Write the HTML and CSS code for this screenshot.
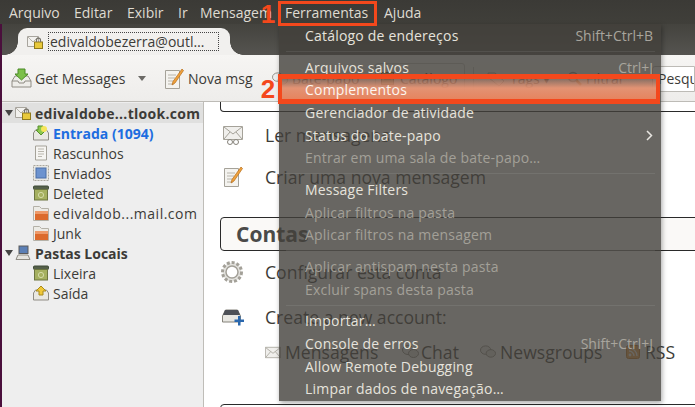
FILE: index.html
```html
<!DOCTYPE html>
<html lang="pt">
<head>
<meta charset="utf-8">
<title>Thunderbird</title>
<link rel="stylesheet" href="styles.css">
</head>
<body>
<svg class="defs" width="0" height="0">
  <defs>
    <symbol id="lockmail" viewBox="0 0 16 14">
      <path d="M.5 1.500h11v10H.5z" fill="#f2f1ee" stroke="#a8a59e"/>
      <path d="M1 2l5 5 5-5" fill="none" stroke="#b5b2aa"/>
      <rect x="7.500" y="7" width="8" height="6.500" fill="#e8c93c" stroke="#8f7a1c"/>
      <path d="M9.500 7V5.200a2 2 0 0 1 4 0V7" fill="none" stroke="#77736a" stroke-width="1.200"/>
    </symbol>
    <symbol id="trash" viewBox="0 0 16 16">
      <rect x=".5" y="1" width="15" height="3.500" rx="1" fill="#55604a" stroke="#3f4a36"/>
      <rect x="1.500" y="4.500" width="13" height="10.500" fill="#a5b060" stroke="#6c7540"/>
      <circle cx="8" cy="10" r="2.600" fill="none" stroke="#d5dba8"/>
    </symbol>
    <symbol id="folder" viewBox="0 0 16 16">
      <path d="M.5 1.500h6l2 2h7v12H.5z" fill="#ecebe6" stroke="#b4b1a8"/>
      <path d="M2 6h13v9H2z" fill="#dc6a2c"/>
      <path d="M2 6h13v3H2z" fill="#ee9a6a"/>
    </symbol>
    <symbol id="envelope" viewBox="0 0 20 16">
      <path d="M.5 1.500h19v13H.5z" fill="#f0efec" stroke="#a5a299"/>
      <path d="M1 2l9 7 9-7M1 14l6-7M19 14l-6-7" fill="none" stroke="#a5a299"/>
    </symbol>
    <symbol id="compose" viewBox="0 0 20 22">
      <path d="M1.500 2.500h14v18h-14z" fill="#f4f3ef" stroke="#a5a299"/>
      <path d="M4 7h8M4 10h7M4 13h6M4 16h6" stroke="#b8b5ac"/>
      <path d="M18 1l1.500 1.500L11 15l-3 2 1-3.500z" fill="#f0a23c" stroke="#b56c1a" stroke-width=".7"/>
    </symbol>
  </defs>
</svg>

<div class="menubar">
  <span class="mb-item">Arquivo</span>
  <span class="mb-item">Editar</span>
  <span class="mb-item">Exibir</span>
  <span class="mb-item">Ir</span>
  <span class="mb-item">Mensagem</span>
  <span class="mb-item">Ferramentas</span>
  <span class="mb-item">Ajuda</span>
</div>

<div class="app">
  <div class="tabbar">
    <div class="tab">
      <svg width="16" height="14"><use href="#lockmail"/></svg>
      <span class="tab-label">edivaldobezerra@outl…</span>
    </div>
  </div>

  <div class="toolbar">
    <div class="tb-btn get">
      <svg width="21" height="21" viewBox="0 0 21 21"><path d="M1 13l3-5h13l3 5v6H1z" fill="#eeede9" stroke="#8f8c84"/><path d="M1 13h6l1 2h5l1-2h6" fill="none" stroke="#8f8c84"/><path d="M7 1h7v5h3l-6.500 6L4 6h3z" fill="#7cc04a" stroke="#4b8a27"/></svg>
      <span>Get Messages</span>
      <i class="caret"></i>
    </div>
    <div class="tb-btn nova">
      <svg width="20" height="22"><use href="#compose"/></svg>
      <span>Nova msg</span>
    </div>
    <div class="tb-btn chat">
      <svg width="16" height="14" viewBox="0 0 17 14"><ellipse cx="6" cy="5" rx="5.500" ry="4.500" fill="#eee" stroke="#8f8c84"/><ellipse cx="11.500" cy="8.500" rx="5" ry="4" fill="#e4e3df" stroke="#8f8c84"/></svg>
      <span>Bate-papo</span>
    </div>
    <div class="tb-btn cat">
      <svg width="15" height="15" viewBox="0 0 15 15"><rect x="1.500" y="1.500" width="12" height="12" fill="#c9a36a" stroke="#7c5a2a"/><path d="M4 5h7M4 8h7" stroke="#7c5a2a"/></svg>
      <span>Catálogo</span>
    </div>
    <div class="tb-sep"></div>
    <div class="tb-btn tags">
      <svg width="18" height="16" viewBox="0 0 18 16"><path d="M1 2h7l9 8-5 5-10-8z" fill="#f3f2ee" stroke="#a5a299"/><circle cx="4.500" cy="5" r="1.200" fill="#a5a299"/></svg>
      <span>Tags ▾</span>
    </div>
    <div class="tb-btn filter">
      <svg width="15" height="15" viewBox="0 0 15 15"><circle cx="6" cy="6" r="4.500" fill="#e8e7e2" stroke="#8f8c84" stroke-width="1.500"/><path d="M9.500 9.500L14 14" stroke="#c9731e" stroke-width="2.500"/></svg>
      <span>Filtrar</span>
    </div>
    <div class="search">Pesqu</div>
  </div>

  <div class="main">
    <aside class="sidebar">
      <div class="row account selected"><i class="twisty"></i><svg width="16" height="14"><use href="#lockmail"/></svg><b class="wide-b">edivaldobe...tlook.com</b></div>
      <div class="row sub inbox">
        <svg width="16" height="16" viewBox="0 0 16 16"><path d="M.5 8l2-3h11l2 3v7H.5z" fill="#e9e8e2" stroke="#8f8c84"/><path d="M5 1h5v4h3l-5 5-5-5h2z" fill="#8cc84e" stroke="#57902c"/><circle cx="11" cy="4" r="3" fill="#f6e55a"/></svg>
        <b>Entrada (1094)</b>
      </div>
      <div class="row sub"><svg width="16" height="16" viewBox="0 0 16 16"><path d="M2.500 1h11v14h-11z" fill="#f6f5f2" stroke="#a5a299"/><path d="M5 4h6M5 6.500h6M5 9h6M5 11.500h4" stroke="#bab7ae"/></svg><span>Rascunhos</span></div>
      <div class="row sub"><svg width="16" height="16" viewBox="0 0 16 16"><rect x=".5" y=".5" width="15" height="15" fill="#e8e7e2" stroke="#aaa79e" stroke-dasharray="2 1"/><rect x="3" y="3" width="10" height="10" fill="#6d93cf" stroke="#4a6fa8"/></svg><span>Enviados</span></div>
      <div class="row sub"><svg width="16" height="16"><use href="#trash"/></svg><span>Deleted</span></div>
      <div class="row sub"><svg width="16" height="16"><use href="#folder"/></svg><span class="wide">edivaldob...mail.com</span></div>
      <div class="row sub"><svg width="16" height="16"><use href="#folder"/></svg><span>Junk</span></div>
      <div class="row account"><i class="twisty"></i><svg width="16" height="16" viewBox="0 0 16 16"><rect x="4" y="1" width="9" height="7.500" fill="#5b7fb5" stroke="#5a5a5a"/><path d="M3 10h10l2 4.500H1z" fill="#e5e4df" stroke="#8f8c84"/></svg><b>Pastas Locais</b></div>
      <div class="row sub"><svg width="16" height="16"><use href="#trash"/></svg><span>Lixeira</span></div>
      <div class="row sub"><svg width="16" height="16" viewBox="0 0 16 16"><path d="M.5 8l2-3h11l2 3v7H.5z" fill="#e9e8e2" stroke="#8f8c84"/><path d="M8 1l5 5h-3v4H6V6H3z" fill="#f0c838" stroke="#a88a1c"/></svg><span>Saída</span></div>
    </aside>

    <section class="content">
      <div class="box stub"></div>
      <div class="action first">
        <svg class="act-ic" width="22" height="22" viewBox="0 0 22 22"><path d="M1.500 2.500h19v13h-19z" fill="#f0efec" stroke="#a5a299"/><path d="M2 3l9 7 9-7M2 15l6-7M20 15l-6-7" fill="none" stroke="#a5a299"/><circle cx="8" cy="18" r="2.500" fill="#fff" stroke="#85827a"/><circle cx="14" cy="18" r="2.500" fill="#fff" stroke="#85827a"/></svg>
        <span>Ler mensagens</span>
      </div>
      <div class="action second">
        <svg class="act-ic" width="20" height="22"><use href="#compose"/></svg>
        <span>Criar uma nova mensagem</span>
      </div>
      <div class="box heading"><h2>Contas</h2></div>
      <div class="action third">
        <svg class="act-ic" width="24" height="24" viewBox="0 0 24 24"><circle cx="12" cy="12" r="9.500" fill="#e4e3df" stroke="#a3a098" stroke-width="3" stroke-dasharray="3 1.900"/><circle cx="12" cy="12" r="6" fill="#fff" stroke="#a3a098" stroke-width="1.500"/></svg>
        <span>Configurar esta conta</span>
      </div>
      <div class="action fourth">
        <svg class="act-ic" width="22" height="18" viewBox="0 0 22 18"><path d="M.5 8l3-6h12l3 6v6H.5z" fill="#e8e7e2" stroke="#85827a"/><path d="M3 2h13l2 5H1z" fill="#4d5057"/><path d="M16 8h2.500v3.500H22V14h-3.500v3.500H16V14h-3.500v-2.500H16z" fill="#2a68ae"/></svg>
        <span>Create a new account:</span>
      </div>
      <div class="kinds">
        <span class="kind k-msg"><svg width="16" height="13"><use href="#envelope"/></svg>Mensagens</span>
        <span class="kind k-chat"><svg width="17" height="14" viewBox="0 0 17 14"><ellipse cx="6" cy="5" rx="5.500" ry="4.500" fill="#eee" stroke="#8f8c84"/><ellipse cx="11.500" cy="8.500" rx="5" ry="4" fill="#e4e3df" stroke="#8f8c84"/></svg>Chat</span>
        <span class="kind k-news"><svg width="16" height="16" viewBox="0 0 17 14"><ellipse cx="6" cy="5" rx="5.500" ry="4.500" fill="#eee" stroke="#8f8c84"/><ellipse cx="11.500" cy="8.500" rx="5" ry="4" fill="#e4e3df" stroke="#8f8c84"/></svg>Newsgroups</span>
        <span class="kind k-rss"><svg width="14" height="14" viewBox="0 0 14 14"><rect x=".5" y=".5" width="13" height="13" rx="2" fill="#f6a64a" stroke="#c77a20"/><circle cx="4" cy="10" r="1.400" fill="#fff"/><path d="M3 6a5 5 0 0 1 5 5M3 3a8 8 0 0 1 8 8" fill="none" stroke="#fff" stroke-width="1.300"/></svg>RSS</span>
      </div>
      <div class="box bottom"></div>
    </section>
  </div>
</div>

<div class="menu">
  <div class="mi"><span>Catálogo de endereços</span><em>Shift+Ctrl+B</em></div>
  <hr>
  <div class="mi"><span>Arquivos salvos</span><em>Ctrl+J</em></div>
  <div class="mi hl"><span>Complementos</span></div>
  <div class="mi"><span>Gerenciador de atividade</span></div>
  <div class="mi"><span>Status do bate-papo</span><svg width="7" height="11" viewBox="0 0 7 11"><path d="M1 1l4.500 4.500L1 10" fill="none" stroke="#e8e6e1" stroke-width="1.500"/></svg></div>
  <div class="mi off"><span>Entrar em uma sala de bate-papo…</span></div>
  <hr>
  <div class="mi"><span>Message Filters</span></div>
  <div class="mi off"><span>Aplicar filtros na pasta</span></div>
  <div class="mi off"><span>Aplicar filtros na mensagem</span></div>
  <hr>
  <div class="mi off"><span>Aplicar antispam nesta pasta</span></div>
  <div class="mi off"><span>Excluir spans desta pasta</span></div>
  <hr>
  <div class="mi"><span>Importar…</span></div>
  <div class="mi"><span>Console de erros</span><em>Shift+Ctrl+J</em></div>
  <div class="mi"><span>Allow Remote Debugging</span></div>
  <div class="mi"><span>Limpar dados de navegação…</span></div>
</div>

<div class="mark-box one"></div>
<div class="mark-box two"></div>
<div class="mark-num n1">1</div>
<div class="mark-num n2">2</div>
</body>
</html>
```
FILE: styles.css
```css
* { box-sizing: border-box; }
html, body { margin: 0; padding: 0; }
body {
  width: 695px; height: 407px; overflow: hidden; position: relative;
  background: #fff; color: #3c3b37;
  font-family: "Open Sans", "Noto Sans", sans-serif; font-size: 14px;
}
.defs { position: absolute; }
svg { flex: none; display: block; }

.menubar {
  height: 24px; display: flex; align-items: center; padding-left: 9px;
  background: linear-gradient(#3b3a36, #403f3a); color: #dfdbd2; font-size: 14px;
}
.mb-item:nth-child(1) { width: 65px; }
.mb-item:nth-child(2) { width: 53px; }
.mb-item:nth-child(3) { width: 51px; }
.mb-item:nth-child(4) { width: 22px; }
.mb-item:nth-child(5) { width: 85px; overflow: hidden; white-space: nowrap; }
.mb-item:nth-child(6) { width: 99px; white-space: nowrap; }

.app { height: 383px; background: #4a0f3c; padding-left: 2px; }

.tabbar { height: 31px; background: linear-gradient(#44433e, #555450); padding-left: 16px; display: flex; align-items: flex-end; }
.tab {
  position: relative; width: 212px; height: 27px; display: flex; align-items: center; gap: 5px; padding-left: 9px;
  background: #f1f0ee; border-radius: 9px 9px 0 0; color: #3c3b37; font-size: 14px;
}
.tab::before, .tab::after { content: ""; position: absolute; bottom: 0; width: 13px; height: 13px; }
.tab::before { left: -13px; background: radial-gradient(circle at 0 0, transparent 12.500px, #f1f0ee 13px); }
.tab::after { right: -13px; background: radial-gradient(circle at 100% 0, transparent 12.500px, #f1f0ee 13px); }
.tab-label { border: 1px dotted #444; padding: 0 4px 0 1px; width: 171px; height: 19px; line-height: 17px; white-space: nowrap; overflow: hidden; }

.toolbar {
  height: 47px; background: linear-gradient(#f6f5f3, #eeedeb); border-bottom: 1px solid #bdbbb6;
  display: flex; align-items: center; padding: 1px 0 0 9px; font-size: 14px;
}
.tb-btn { display: flex; align-items: center; gap: 3px; white-space: nowrap; flex: none; }
.get { width: 153px; }
.caret { width: 0; height: 0; margin-left: 10px; border: 4px solid transparent; border-top: 5px solid #6b6a66; border-bottom: 0; }
.nova { width: 108px; gap: 4px; }
.chat { width: 99px; gap: 4px; }
.cat { width: 90px; margin-left: 4px; padding-left: 4px; gap: 5px; height: 31px; border: 1px solid #c8c6c0; border-radius: 3px; }
.tb-sep { flex: none; width: 1px; height: 24px; background: #c8c6c0; margin: 0 13px 0 8px; }
.tags { width: 80px; gap: 5px; }
.filter { width: 85px; gap: 4px; }
.search { flex: 1; height: 26px; padding: 2px 0 0 5px; background: #fff; border: 1px solid #bdbbb6; border-radius: 3px 0 0 3px; overflow: hidden; }

.main { height: 305px; display: flex; background: #fff; overflow: hidden; }
.sidebar { width: 202px; flex: none; background: #eee; border-right: 1px solid #bfbdb8; font-size: 14px; padding-top: 1px; }
.row { height: 20px; display: flex; align-items: center; white-space: nowrap; }
.row.selected { background: #e0e0df; }
.account { padding-left: 3px; }
.account b { margin-left: 4px; }
.wide { letter-spacing: .5px; }
.wide-b { letter-spacing: .3px; }
.twisty { flex: none; width: 0; height: 0; border: 4px solid transparent; border-top: 6px solid #444; border-bottom: 0; margin-right: 2px; }
.sub { padding-left: 31px; gap: 4px; }
.inbox b { color: #1d6de0; }

.content { flex: 1; padding-left: 16px; display: flex; flex-direction: column; font-size: 17.600px; color: #3c3b37; min-width: 0; }
.box { border: 1px solid #2a2a2a; border-radius: 4px; background: #faf9f7; flex: none; }
.stub { height: 12px; margin-top: -2px; border-top: 0; border-radius: 0 0 4px 4px; background: #fff; margin-right: -4px; }
.action { display: flex; align-items: center; white-space: nowrap; flex: none; }
.first { height: 22px; margin-top: 12px; }
.first .act-ic { margin: 0 21px 0 2px; }
.second { height: 24px; margin-top: 19px; }
.second .act-ic { margin: 0 22px 0 3px; }
.heading { height: 34px; margin-top: 28px; margin-right: -4px; display: flex; align-items: center; padding-left: 15px; }
.heading h2 { margin: 0; font-size: 21px; font-weight: 700; color: #4a4a48; }
.third { height: 24px; margin-top: 9px; }
.third .act-ic { margin-right: 21px; }
.fourth { height: 22px; margin-top: 22px; }
.fourth .act-ic { margin: 0 21px 0 2px; }
.kinds { height: 24px; margin-top: 12px; position: relative; flex: none; }
.kind { position: absolute; top: 0; display: flex; align-items: center; gap: 4px; height: 24px; }
.k-msg { left: 45px; }
.k-chat { left: 182px; gap: 2px; }
.k-news { left: 260px; }
.k-rss { left: 406px; gap: 5px; }
.bottom { height: 20px; margin-top: 40px; margin-right: -4px; background: #fff; }

.menu {
  position: absolute; left: 279px; top: 24px; width: 382px; height: 377px;
  background: rgba(66, 64, 59, .8); box-shadow: 1px 2px 5px rgba(0,0,0,.35);
  color: #e6e3dc; font-size: 14px; letter-spacing: .2px;
}
.mi { height: 22.700px; display: flex; align-items: center; justify-content: space-between; padding: 0 8px 0 26px; white-space: nowrap; }
.mi em { font-style: normal; color: #a8a59d; letter-spacing: 0; }
.off { color: #a3a098; }
.hl { position: relative; z-index: 2; color: #fdf6f0; }
.menu hr { height: 1px; margin: 4px 6px 4px 7px; border: 0; background: rgba(255,255,255,.08); }

.mark-box { position: absolute; border: 3px solid #f4481c; }
.one { left: 278px; top: 1px; width: 99px; height: 25px; }
.two {
  left: 278px; top: 74px; width: 382px; height: 30px; border-width: 5px 4px;
  background: linear-gradient(rgba(240, 150, 115, .25), rgba(240, 152, 118, .9) 45%, #e6845f);
}
.mark-num { position: absolute; left: 260px; width: 16px; text-align: center; color: #f4481c; font-family: "Liberation Sans", sans-serif; font-weight: 700; font-size: 26px; line-height: 26px; }
.n1 { top: 1px; }
.n2 { top: 76px; }
```
